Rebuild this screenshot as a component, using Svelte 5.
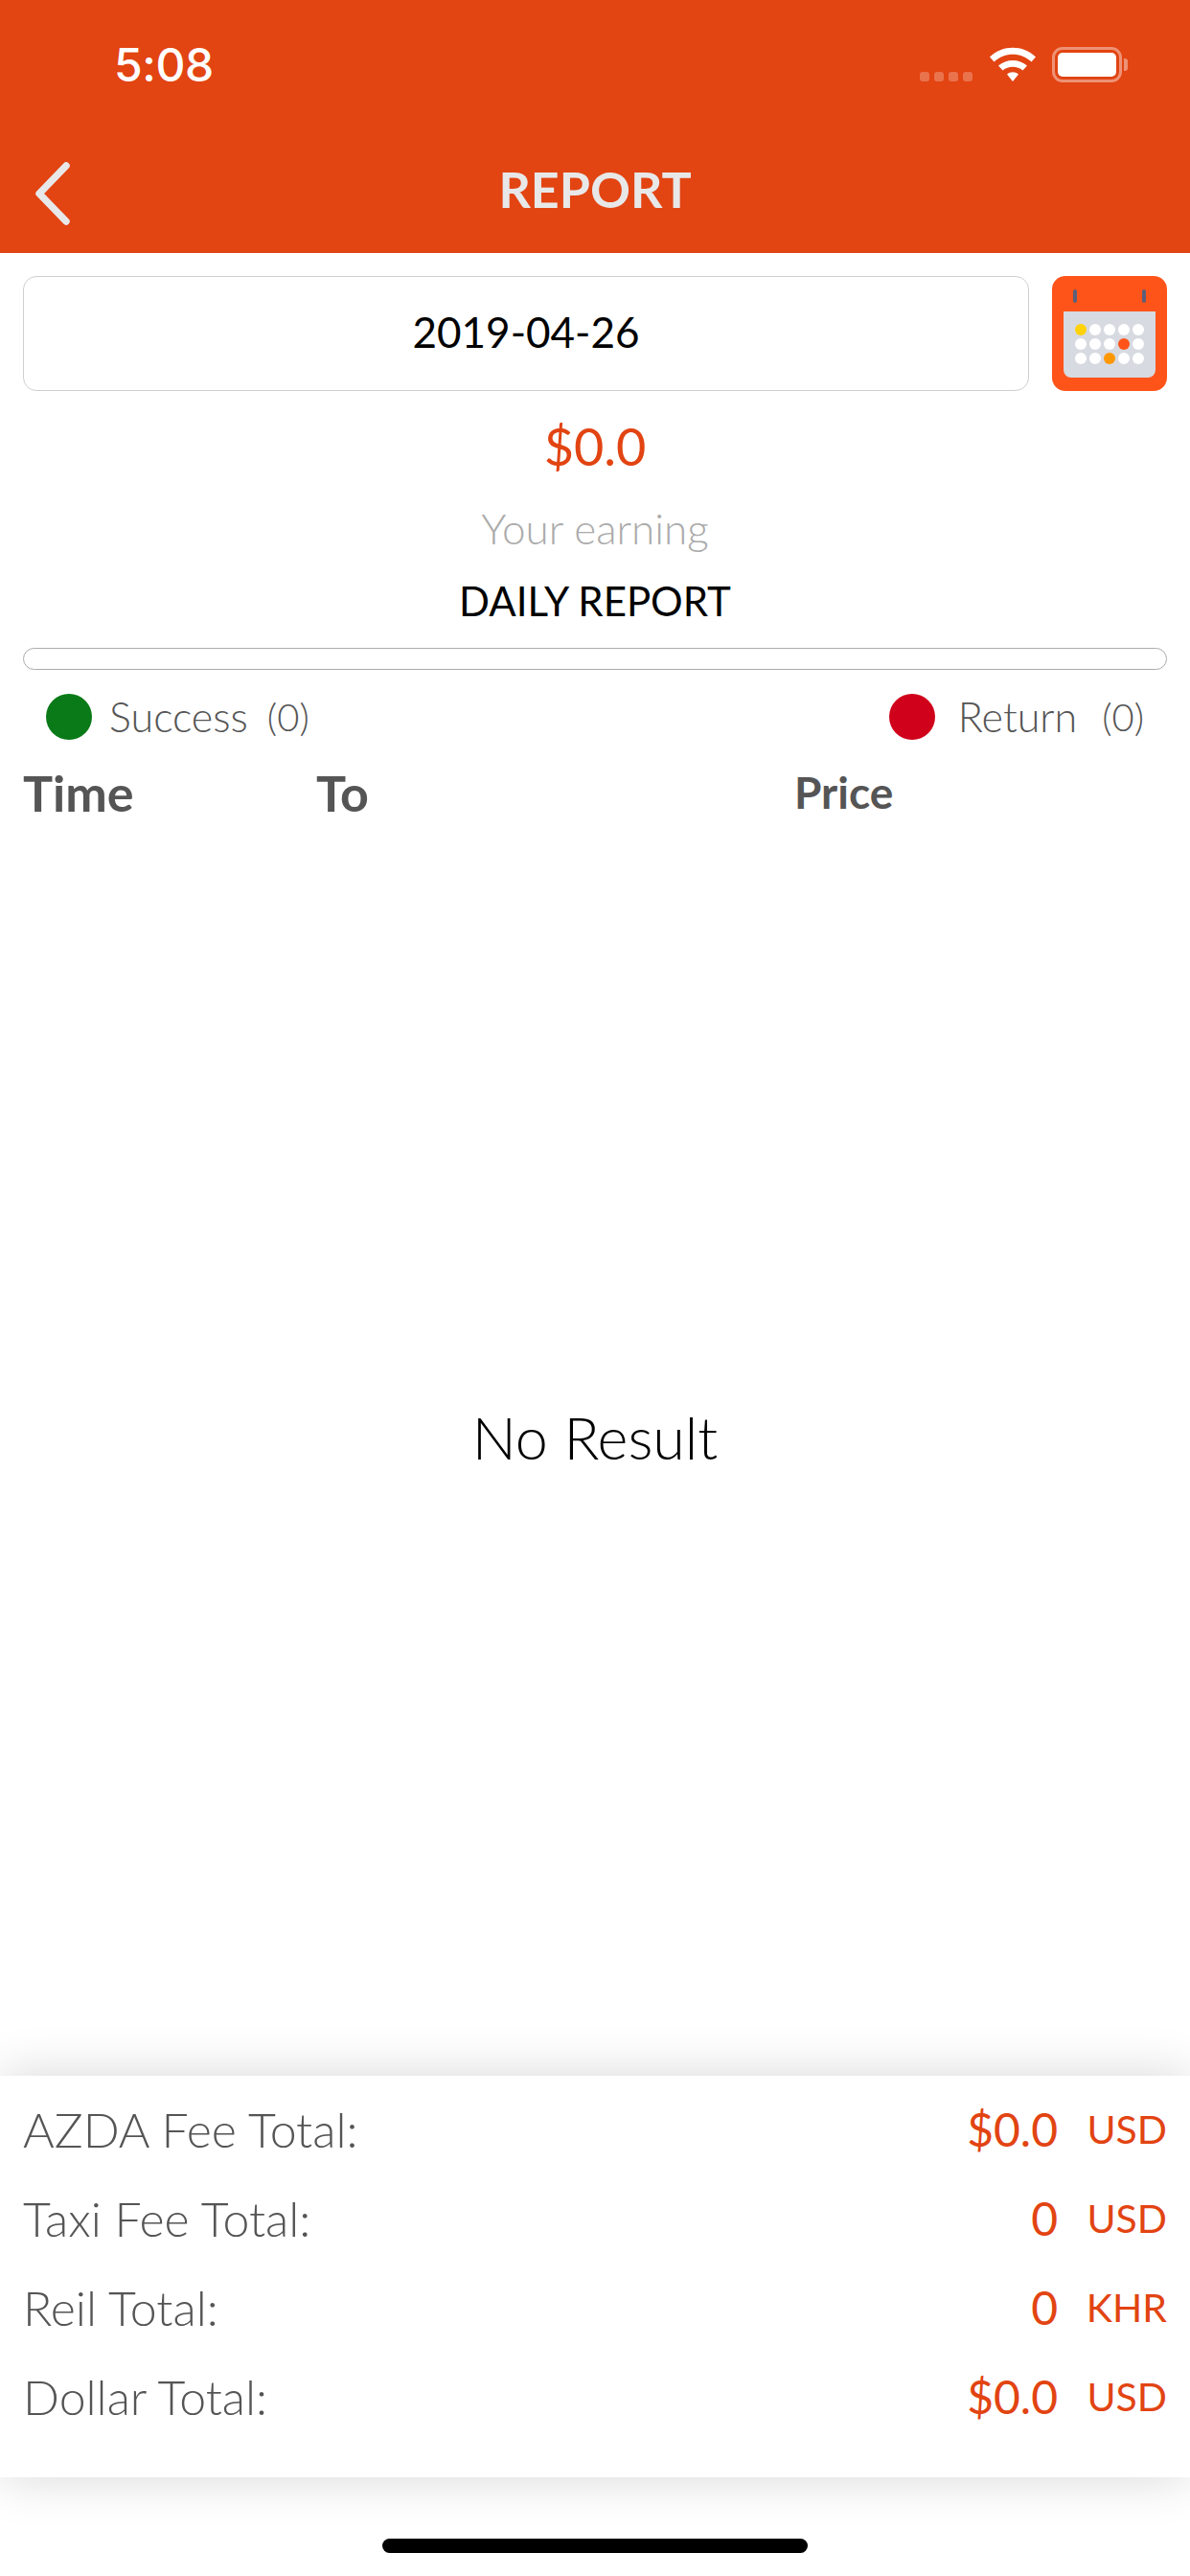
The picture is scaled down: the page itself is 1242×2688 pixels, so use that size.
<script>
  const dots = [
    ['#FFD20A','#fff','#fff','#fff','#fff'],
    ['#fff','#fff','#fff','#FF5419','#fff'],
    ['#fff','#fff','#FF9800','#fff','#fff']
  ];
  const totals = [
    { label: 'AZDA Fee Total:', value: '$0.0', unit: 'USD' },
    { label: 'Taxi Fee Total:', value: '0', unit: 'USD' },
    { label: 'Reil Total:', value: '0', unit: 'KHR' },
    { label: 'Dollar Total:', value: '$0.0', unit: 'USD' }
  ];
</script>

<div class="page">
  <header class="header">
    <div class="status">
      <span class="time">5:08</span>
      <div class="status-icons">
        <div class="signal"><i></i><i></i><i></i><i></i></div>
        <svg class="wifi" width="50" height="37" viewBox="0 0 50 37">
          <path d="M1 10.5C14 -2.5 36 -2.5 49 10.5L44.5 15.5C33.5 5 16.5 5 5.500 15.500Z" fill="#fff"/>
          <path d="M10 19.500C18 12 32 12 40 19.500L35.500 24.500C29.500 19.500 20.500 19.500 14.500 24.500Z" fill="#fff"/>
          <path d="M19 28.500C22.500 25.500 27.500 25.500 31 28.500L25 36Z" fill="#fff"/>
        </svg>
        <div class="battery"><div class="battery-fill"></div></div>
        <div class="nub"></div>
      </div>
    </div>
    <div class="nav">
      <svg class="back" width="44" height="68" viewBox="0 0 44 68">
        <path d="M34 5L6 34L34 63" fill="none" stroke="#E8E8E8" stroke-width="7.500" stroke-linecap="round" stroke-linejoin="round"/>
      </svg>
      <span class="title">REPORT</span>
    </div>
  </header>

  <main class="main">
    <div class="date-row">
      <div class="date">2019-04-26</div>
      <svg class="cal" width="120" height="120" viewBox="0 0 120 120">
        <rect width="120" height="120" rx="14" fill="#FF5419"/>
        <path d="M12 37H108V98a8 8 0 0 1-8 8H20a8 8 0 0 1-8-8Z" fill="#D7DAE0"/>
        <rect x="22" y="14" width="4" height="14" rx="2" fill="#5C5F7A"/>
        <rect x="94" y="14" width="4" height="14" rx="2" fill="#5C5F7A"/>
        {#each dots as row, r}
          {#each row as color, c}
            <circle cx={30 + c * 15} cy={56 + r * 15} r="6" fill={color}/>
          {/each}
        {/each}
      </svg>
    </div>

    <div class="amount">$0.0</div>
    <div class="earning">Your earning</div>
    <div class="daily">DAILY REPORT</div>
    <div class="bar"></div>

    <div class="legend">
      <div class="legend-item"><span class="dot green"></span><span>Success</span><span class="count">(0)</span></div>
      <div class="legend-item wide"><span class="dot red"></span><span>Return</span><span class="count">(0)</span></div>
    </div>

    <div class="thead">
      <span class="c-time">Time</span>
      <span class="c-to">To</span>
      <span class="c-price">Price</span>
    </div>

    <div class="empty">No Result</div>
  </main>

  <section class="totals">
    {#each totals as t}
      <div class="row">
        <span class="label">{t.label}</span>
        <span class="value">{t.value}</span>
        <span class="unit">{t.unit}</span>
      </div>
    {/each}
  </section>

  <footer class="footer"><div class="home"></div></footer>
</div>

<style>
  :global(body) { margin: 0; background: #fff; }
  .page {
    width: 1242px;
    height: 2688px;
    display: flex;
    flex-direction: column;
    font-family: Lato, "Noto Sans", sans-serif;
    background: #fff;
    overflow: hidden;
  }
  .header { height: 264px; background: #E24412; flex: none; display: flex; flex-direction: column; }
  .status { height: 136px; display: flex; justify-content: space-between; padding: 0 65px 0 119px; box-sizing: border-box; }
  .time { font: 500 48px/1 Inter, sans-serif; color: #fff; margin-top: 44px; letter-spacing: -0.4px; }
  .status-icons { display: flex; align-items: flex-start; padding-top: 49px; }
  .signal { display: flex; gap: 5px; margin-top: 26px; margin-right: 17px; }
  .signal i { width: 10px; height: 10px; border-radius: 3px; background: rgba(255,255,255,.25); }
  .wifi { margin-right: 16px; }
  .battery { width: 73px; height: 37px; box-sizing: border-box; border: 3px solid rgba(255,255,255,.42); border-radius: 11px; padding: 3px; }
  .battery-fill { height: 100%; background: #fff; border-radius: 5px; }
  .nub { width: 4px; height: 13px; margin: 12px 0 0 2px; background: rgba(255,255,255,.42); border-radius: 0 3px 3px 0; }
  .nav { flex: 1; position: relative; display: flex; align-items: center; justify-content: center; }
  .back { position: absolute; left: 35px; top: 32px; }
  .title { font: 700 52px/1 Lato, sans-serif; color: #E8E8E8; padding-bottom: 6px; }

  .main { flex: 1; min-height: 0; display: flex; flex-direction: column; padding: 24px 24px 0; box-sizing: border-box; }
  .date-row { display: flex; gap: 24px; }
  .date {
    flex: 1; height: 120px; box-sizing: border-box; border: 1.5px solid #CFCFCF; border-radius: 14px;
    display: flex; align-items: center; justify-content: center; padding-bottom: 4px;
    font: 400 44px/1 Lato, sans-serif; color: #000;
  }
  .cal { flex: none; }
  .amount { text-align: center; color: #E24412; font-size: 54px; line-height: 60px; margin-top: 28px; }
  .earning { text-align: center; color: #ABABAB; font-size: 44px; font-weight: 300; line-height: 50px; margin-top: 30px; }
  .daily { text-align: center; color: #000; font-size: 42px; font-weight: 400; line-height: 50px; margin-top: 26px; }
  .bar { height: 23px; box-sizing: border-box; border: 1.5px solid #ABABAB; border-radius: 12px; margin-top: 24px; }
  .legend { display: flex; justify-content: space-between; padding: 23px 24px 0; }
  .legend-item { display: flex; align-items: center; gap: 18px; font-size: 43px; font-weight: 300; color: #555; }
  .legend-item .count { font-size: 40px; margin-left: 2px; }
  .legend-item.wide { gap: 24px; }
  .legend-item.wide .count { margin-left: 2px; }
  .dot { width: 48px; height: 48px; border-radius: 50%; }
  .green { background: #097A17; }
  .red { background: #D0021B; }
  .thead { display: flex; margin-top: 24px; font: 700 52px/60px Lato, sans-serif; color: #555; }
  .c-time { width: 306px; }
  .c-to { width: 499px; }
  .c-price { font-size: 46px; }
  .empty { flex: 1; display: flex; align-items: center; justify-content: center; font-size: 61px; color: #000; font-weight: 300; padding-bottom: 24px; }

  .totals {
    flex: none; height: 419px; box-sizing: border-box; padding: 9px 24px 0; background: #fff;
    box-shadow: 0 0 50px rgba(0,0,0,.16); position: relative;
    display: flex; flex-direction: column;
  }
  .row { height: 93px; display: flex; align-items: center; font-size: 50px; font-weight: 300; }
  .label { flex: 1; color: #555; }
  .value { color: #E24412; font-size: 48px; font-weight: 400; }
  .unit { width: 114px; text-align: right; color: #E24412; font-size: 41px; font-weight: 400; }

  .footer { height: 103px; flex: none; display: flex; justify-content: center; }
  .home { width: 444px; height: 15px; margin-top: 64px; border-radius: 8px; background: #000; }
</style>
